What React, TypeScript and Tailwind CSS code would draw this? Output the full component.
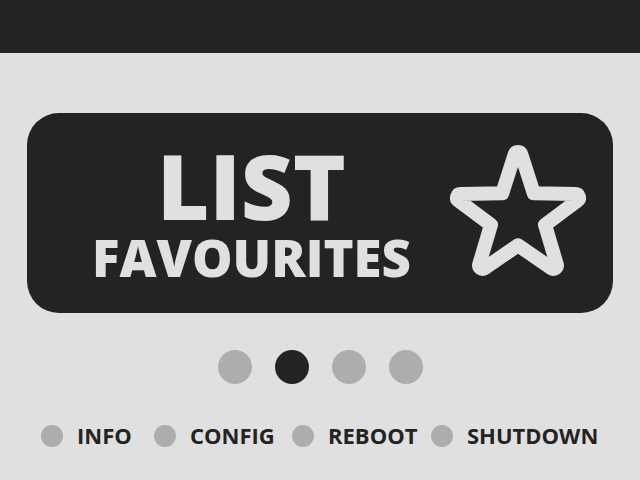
const pages = ["All games", "List favourites", "History", "Search"];
const current = 1;

const actions = ["INFO", "CONFIG", "REBOOT", "SHUTDOWN"];

function StarIcon() {
  return (
    <svg
      viewBox="0 0 140 140"
      className="size-[140px] shrink-0"
      fill="none"
      stroke="currentColor"
      strokeWidth={14}
      strokeLinejoin="round"
      aria-hidden="true"
    >
      <path d="M66.7 11.4 54.2 50.3 12.6 51.1A3.6 3.6 0 0 0 10.5 57.6L43 81.8 31.2 121.4A3.6 3.6 0 0 0 36.7 125.2L70 102.3 103.3 125.2A3.6 3.6 0 0 0 108.8 121.4L97 81.8 129.5 57.6A3.6 3.6 0 0 0 127.4 51.1L85.8 50.3 73.3 11.4A3.5 3.5 0 0 0 66.7 11.4Z" />
    </svg>
  );
}

export default function App() {
  return (
    <div className="flex min-h-screen flex-col bg-[#e0e0e0] font-['Open_Sans',sans-serif] text-[#232323]">
      <header className="h-[53px] bg-[#232323]" />
      <main className="px-[27px] pt-[60px]">
        <button
          type="button"
          className="flex h-[200px] w-full items-center rounded-[32px] bg-[#232323] pr-[25px] text-[#e0e0e0]"
        >
          <span className="flex flex-1 flex-col items-center pl-7 font-extrabold">
            <span className="text-[90px] leading-[88px]">LIST</span>
            <span className="text-[51px] leading-[56px]">FAVOURITES</span>
          </span>
          <StarIcon />
        </button>
        <nav aria-label="Pages" className="mt-[37px] flex justify-center gap-[23px]">
          {pages.map((page, i) => (
            <button
              key={page}
              type="button"
              aria-label={page}
              aria-current={i === current ? "page" : undefined}
              className={`size-[34px] rounded-full ${i === current ? "bg-[#232323]" : "bg-[#adadad]"}`}
            />
          ))}
        </nav>
      </main>
      <footer className="mt-[38px] grid grid-cols-[113fr_138fr_139fr_169fr] pr-10 pl-[41px]">
        {actions.map((action) => (
          <button
            key={action}
            type="button"
            className="flex items-center gap-3.5 text-[22px] leading-[26px] font-bold whitespace-nowrap"
          >
            <span className="size-[22px] shrink-0 rounded-full bg-[#adadad]" />
            <span className="pb-0.5">{action}</span>
          </button>
        ))}
      </footer>
    </div>
  );
}
